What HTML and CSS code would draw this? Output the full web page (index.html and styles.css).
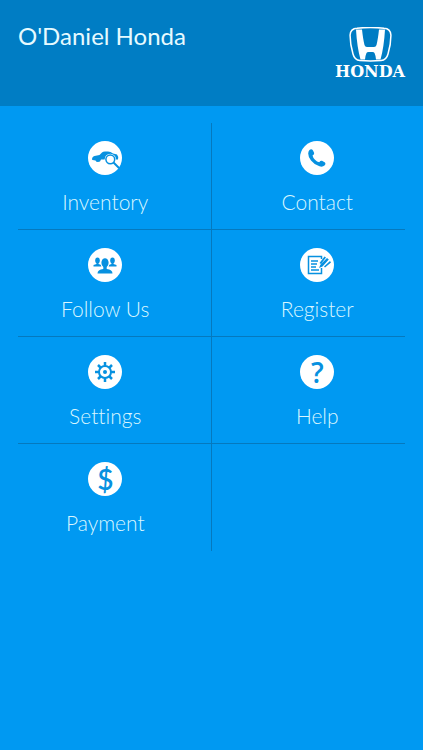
FILE: index.html
```html
<!DOCTYPE html>
<html lang="en">
<head>
  <meta charset="UTF-8">
  <meta name="viewport" content="width=device-width, initial-scale=1.0">
  <title>O'Daniel Honda</title>
  <link rel="stylesheet" href="styles.css">
</head>
<body>

  <header class="header">
    <h1 class="title">O'Daniel Honda</h1>
    <div class="logo">
      <svg class="logo-mark" viewBox="0 0 43 35" aria-hidden="true">
        <path d="M8 1.2Q21.500 -.2 35 1.200Q41.500 1.500 41.900 8Q42 17 39 27Q37.500 33 32 33.500Q21.500 34.400 11 33.500Q5.500 33 4 27Q1 17 1.100 8Q1.500 1.500 8 1.200Z" fill="none" stroke="#fff" stroke-width="1.500"/>
        <path d="M7 2.500L13 2.500Q14 12 15.500 18Q16 20 18 20H25Q27 20 27.500 18Q29 12 30 2.500L36 2.500Q35 20 31.500 32.500H27Q26.500 28 25.500 26Q25 25 23.500 25H19.500Q18 25 17.500 26Q16.500 28 16 32.500H11.500Q8 20 7 2.500Z" fill="#fff"/>
      </svg>
      <span class="logo-text">HONDA</span>
    </div>
  </header>

  <nav>
    <ul class="menu">
      <li class="menu-item">
        <a href="#inventory">
          <svg class="icon" viewBox="0 0 34 34" aria-hidden="true">
            <circle class="disc" cx="17" cy="17" r="17"/>
            <path class="shape" d="M4 18.500Q4 15.500 6.500 15L11.500 14L14 11.500Q15 10.500 17 10.500H20Q22.500 10.500 25 12.500L29 13.500Q30.500 15 30 18.500H13Q12.500 21 10 21Q8 21 7.500 19.500L4.500 19Z"/>
            <circle class="lens" cx="22.300" cy="18.300" r="5.600"/>
            <circle class="line thin" cx="22.300" cy="18.300" r="4.400"/>
            <path class="line" d="M25.500 21.500L31 27"/>
          </svg>
          <span>Inventory</span>
        </a>
      </li>
      <li class="menu-item">
        <a href="#contact">
          <svg class="icon" viewBox="0 0 34 34" aria-hidden="true">
            <circle class="disc" cx="17" cy="17" r="17"/>
            <path class="shape" d="M9.500 9Q11.500 7.500 13 9.500L14.200 12Q14.300 13.500 12.500 14.500Q13 17 15 18.700Q17 20.700 19.200 21.200Q20.500 19.500 22 19.800L25 21.500Q26.300 23 24.500 24.500Q22.500 26.300 19.500 25.300Q14 23.500 11 19.500Q8.200 16 8.200 12.500Q8.300 10 9.500 9Z"/>
          </svg>
          <span>Contact</span>
        </a>
      </li>
      <li class="menu-item">
        <a href="#follow">
          <svg class="icon" viewBox="0 0 34 34" aria-hidden="true">
            <circle class="disc" cx="17" cy="17" r="17"/>
            <g class="shape">
              <ellipse cx="9.500" cy="12.500" rx="2.300" ry="3"/>
              <path d="M8.500 14H10.500V16L13.500 17V18.500H5.500V17L8.500 16Z"/>
              <ellipse cx="24.500" cy="12.500" rx="2.300" ry="3"/>
              <path d="M23.500 14H25.500V16L28.500 17V18.500H20.500V17L23.500 16Z"/>
            </g>
            <ellipse class="cut" cx="17" cy="14.800" rx="4.600" ry="5.600"/>
            <ellipse class="shape" cx="17" cy="14.800" rx="3.600" ry="4.600"/>
            <path class="shape" d="M15.300 18H18.700V21Q24.500 21.500 24.500 25.500H9.500Q9.500 21.500 15.300 21Z"/>
          </svg>
          <span>Follow Us</span>
        </a>
      </li>
      <li class="menu-item">
        <a href="#register">
          <svg class="icon" viewBox="0 0 34 34" aria-hidden="true">
            <circle class="disc" cx="17" cy="17" r="17"/>
            <path class="line thin" d="M21.500 11V8.500H8.500V25.500H21.500V20M11 13H18M11 16H17M11 19H16M11 22H19"/>
            <path class="shape" d="M24.500 8.500L26 9.500L21 16L19.500 15ZM27 10L28.800 11.500L22.500 18.500L19 20L20.500 16.500ZM30 13L31 14.500L25 19.500L24 18.500Z"/>
          </svg>
          <span>Register</span>
        </a>
      </li>
      <li class="menu-item">
        <a href="#settings">
          <svg class="icon" viewBox="0 0 34 34" aria-hidden="true">
            <circle class="disc" cx="17" cy="17" r="17"/>
            <path class="teeth" d="M17 7V11M17 23V27M7 17H11M23 17H27M10 10L13 13M21 21L24 24M10 24L13 21M21 13L24 10"/>
            <circle class="line" cx="17" cy="17" r="6"/>
            <circle class="shape" cx="17" cy="17" r="2"/>
          </svg>
          <span>Settings</span>
        </a>
      </li>
      <li class="menu-item">
        <a href="#help">
          <span class="icon sign question" aria-hidden="true">?</span>
          <span>Help</span>
        </a>
      </li>
      <li class="menu-item">
        <a href="#payment">
          <span class="icon sign" aria-hidden="true">$</span>
          <span>Payment</span>
        </a>
      </li>
      <li class="menu-item"></li>
    </ul>
  </nav>

</body>
</html>
```
FILE: styles.css
```css
* {
  box-sizing: border-box;
}
body {
  margin: 0;
  min-height: 100vh;
  background: #0099f2;
  color: #fff;
  font-family: Lato, sans-serif;
  font-variant-ligatures: none;
}
.header {
  display: flex;
  justify-content: space-between;
  align-items: flex-start;
  min-height: 106px;
  padding: 20px 14px 20px 18px;
  background: #007dc4;
}
.title {
  margin: 0;
  font-size: 24px;
  line-height: 32px;
  font-weight: 400;
  color: #e6faff;
}
.logo {
  display: flex;
  flex-direction: column;
  align-items: center;
  min-width: 78px;
  padding-top: 7px;
}
.logo-mark {
  width: 43px;
  height: 35px;
}
.logo-text {
  font-family: "DejaVu Serif", serif;
  font-size: 16px;
  line-height: 20px;
  font-weight: 700;
}
.menu {
  display: grid;
  grid-template-columns: 1fr 1fr;
  margin: 0;
  padding: 17px 0;
  list-style: none;
}
.menu-item {
  height: 107px;
  border-bottom: 1px solid #0579be;
}
.menu-item:nth-child(odd) {
  margin-left: 18px;
  padding-right: 18px;
  border-right: 1px solid #0579be;
}
.menu-item:nth-child(even) {
  margin-right: 18px;
  padding-left: 18px;
}
.menu-item:nth-last-child(-n+2) {
  border-bottom: 0;
}
.menu-item a {
  display: flex;
  flex-direction: column;
  align-items: center;
  gap: 12px;
  padding-top: 18px;
  color: #d9f6ff;
  font-size: 21px;
  line-height: 30px;
  font-weight: 300;
  text-decoration: none;
}
.icon {
  width: 34px;
  height: 34px;
}
.disc,
.cut,
.lens {
  fill: #fff;
}
.shape {
  fill: #0791e0;
}
.line,
.teeth {
  fill: none;
  stroke: #0791e0;
  stroke-width: 2;
}
.thin {
  stroke-width: 1.5;
}
.teeth {
  stroke-width: 2.5;
}
.sign {
  border-radius: 50%;
  background: #fff;
  color: #0791e0;
  font-size: 28px;
  line-height: 34px;
  font-weight: 600;
  text-align: center;
}
.question {
  font-family: "Open Sans", sans-serif;
  font-size: 28px;
}
```
